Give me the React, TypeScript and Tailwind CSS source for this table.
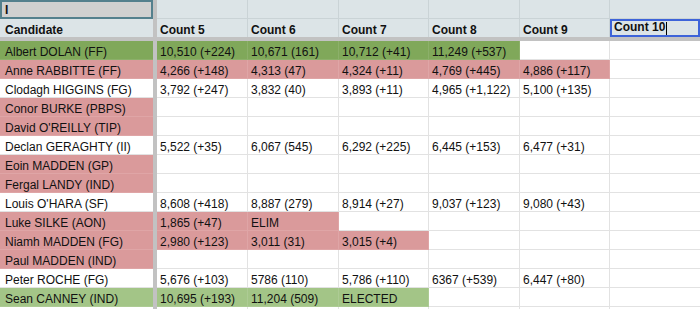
import React from 'react';

type Fill = 'none' | 'green' | 'lightGreen' | 'red';

const FILL_CLASSES: Record<Fill, string> = {
  none: 'bg-white border-[#e2e2e2]',
  green: 'bg-[#80a85a] border-[#8cb06a]',
  lightGreen: 'bg-[#a3c587] border-[#adcb94]',
  red: 'bg-[#da9a9b] border-[#dfa5a6]',
};

// widths of count columns (Count 5 .. Count 9), last column fills the rest
const COL_WIDTHS = ['w-[91px]', 'w-[91px]', 'w-[90px]', 'w-[91px]', 'w-[90px]'];

const HEADERS = ['Count 5', 'Count 6', 'Count 7', 'Count 8', 'Count 9'];

const rows: { name: string; fill: Fill; span: number; counts: string[] }[] = [
  {
    name: 'Albert DOLAN (FF)',
    fill: 'green',
    span: 4,
    counts: ['10,510 (+224)', '10,671 (161)', '10,712 (+41)', '11,249 (+537)'],
  },
  {
    name: 'Anne RABBITTE (FF)',
    fill: 'red',
    span: 5,
    counts: ['4,266 (+148)', '4,313 (47)', '4,324 (+11)', '4,769 (+445)', '4,886 (+117)'],
  },
  {
    name: 'Clodagh HIGGINS (FG)',
    fill: 'none',
    span: 0,
    counts: ['3,792 (+247)', '3,832 (40)', '3,893 (+11)', '4,965 (+1,122)', '5,100 (+135)'],
  },
  { name: 'Conor BURKE (PBPS)', fill: 'red', span: 0, counts: [] },
  { name: "David O'REILLY (TIP)", fill: 'red', span: 0, counts: [] },
  {
    name: 'Declan GERAGHTY (II)',
    fill: 'none',
    span: 0,
    counts: ['5,522 (+35)', '6,067 (545)', '6,292 (+225)', '6,445 (+153)', '6,477 (+31)'],
  },
  { name: 'Eoin MADDEN (GP)', fill: 'red', span: 0, counts: [] },
  { name: 'Fergal LANDY (IND)', fill: 'red', span: 0, counts: [] },
  {
    name: "Louis O'HARA (SF)",
    fill: 'none',
    span: 0,
    counts: ['8,608 (+418)', '8,887 (279)', '8,914 (+27)', '9,037 (+123)', '9,080 (+43)'],
  },
  { name: 'Luke SILKE (AON)', fill: 'red', span: 2, counts: ['1,865 (+47)', 'ELIM'] },
  {
    name: 'Niamh MADDEN (FG)',
    fill: 'red',
    span: 3,
    counts: ['2,980 (+123)', '3,011 (31)', '3,015 (+4)'],
  },
  { name: 'Paul MADDEN (IND)', fill: 'red', span: 0, counts: [] },
  {
    name: 'Peter ROCHE (FG)',
    fill: 'none',
    span: 0,
    counts: ['5,676 (+103)', '5786 (110)', '5,786 (+110)', '6367 (+539)', '6,447 (+80)'],
  },
  {
    name: 'Sean CANNEY (IND)',
    fill: 'lightGreen',
    span: 3,
    counts: ['10,695 (+193)', '11,204 (509)', 'ELECTED'],
  },
];

const Separator = () => <div className="w-[4px] shrink-0 bg-[#c2c2c2]" />;

const App = () => {
  return (
    <div
      className="w-[700px] h-[309px] overflow-hidden bg-white text-[12px] leading-[14px] text-[#111]"
      style={{ fontFamily: '"Liberation Sans", Arial, sans-serif' }}
    >
      {/* Row 1 */}
      <div className="flex h-[19px] bg-[#dce4e7]">
        <div className="w-[153px] shrink-0 bg-[#d0d0d0] border-2 border-[#54808d] flex items-center pl-[3px]">
          <span className="font-bold">I</span>
        </div>
        <Separator />
        {COL_WIDTHS.map((w, i) => (
          <div key={i} className={`${w} shrink-0 border-r border-b border-[#cad3d6]`} />
        ))}
        <div className="flex-1 border-b border-[#cad3d6]" />
      </div>

      {/* Header row */}
      <div className="flex h-[18px] bg-[#dce4e7] font-bold">
        <div className="w-[153px] shrink-0 flex items-end pl-[5px]">Candidate</div>
        <Separator />
        {HEADERS.map((h, i) => (
          <div
            key={h}
            className={`${COL_WIDTHS[i]} shrink-0 border-r border-[#cad3d6] flex items-end pl-[3px]`}
          >
            {h}
          </div>
        ))}
        <div className="flex-1 border-2 border-[#3d63d9] flex items-end pl-[2px] pb-[1px]">
          Count 10
          <span className="inline-block w-px h-[13px] bg-black ml-[1px] mb-[-1px]" />
        </div>
      </div>

      {/* Frozen row divider */}
      <div className="h-[4px] bg-[#c2c2c2]" />

      {/* Data rows */}
      {rows.map((row) => (
        <div key={row.name} className="flex h-[19px]">
          <div
            className={`w-[153px] shrink-0 border-b flex items-end pl-[5px] ${FILL_CLASSES[row.fill]}`}
          >
            {row.name}
          </div>
          <Separator />
          {COL_WIDTHS.map((w, i) => {
            const fill: Fill = i < row.span ? row.fill : 'none';
            return (
              <div
                key={i}
                className={`${w} shrink-0 border-r border-b flex items-end pl-[3px] whitespace-nowrap ${FILL_CLASSES[fill]}`}
              >
                {row.counts[i] ?? ''}
              </div>
            );
          })}
          <div className="flex-1 border-b border-[#e2e2e2]" />
        </div>
      ))}

      {/* Partial row at the bottom */}
      <div className="flex h-[19px]">
        <div className="w-[153px] shrink-0 border-b border-[#e2e2e2]" />
        <Separator />
        {COL_WIDTHS.map((w, i) => (
          <div key={i} className={`${w} shrink-0 border-r border-b border-[#e2e2e2]`} />
        ))}
        <div className="flex-1" />
      </div>
    </div>
  );
};

export default App;
